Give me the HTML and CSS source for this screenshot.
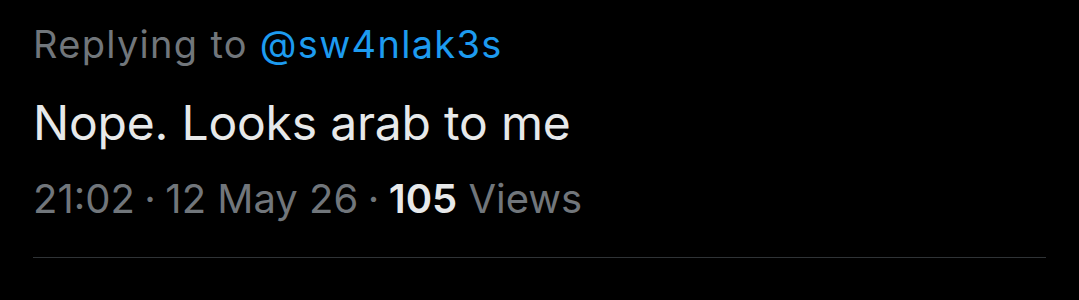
FILE: index.html
```html
<!DOCTYPE html>
<html lang="en">
<head>
    <meta charset="UTF-8">
    <title>Reply</title>
    <link rel="stylesheet" href="styles.css">
</head>
<body>
    <div class="tweet">
        <div class="reply-to">Replying to <a href="#">@sw4nlak3s</a></div>
        <div class="text">Nope. Looks arab to me</div>
        <div class="meta">
            <span>21:02</span><span class="dot">·</span><span>12 May 26</span><span class="dot">·</span><b>105</b> Views
        </div>
    </div>
</body>
</html>
```
FILE: styles.css
```css
body {
    margin: 0;
    background-color: #000;
    font-family: Inter, "Noto Sans", sans-serif;
}
.tweet {
    padding: 21px 33px 0 33px;
}
.reply-to {
    color: #71767b;
    font-size: 38px;
    line-height: 46px;
    letter-spacing: 1.3px;
}
.reply-to a {
    color: #1d9bf0;
    text-decoration: none;
}
.text {
    color: #e7e9ea;
    font-size: 48px;
    line-height: 58px;
    margin-top: 27px;
    letter-spacing: -0.2px;
}
.meta {
    color: #71767b;
    font-size: 40px;
    line-height: 48px;
    margin-top: 23px;
    padding-bottom: 34px;
    border-bottom: 1px solid #2f3336;
}
.dot {
    margin: 0 9.5px;
}
.meta b {
    color: #e7e9ea;
    font-weight: 600;
}
```
